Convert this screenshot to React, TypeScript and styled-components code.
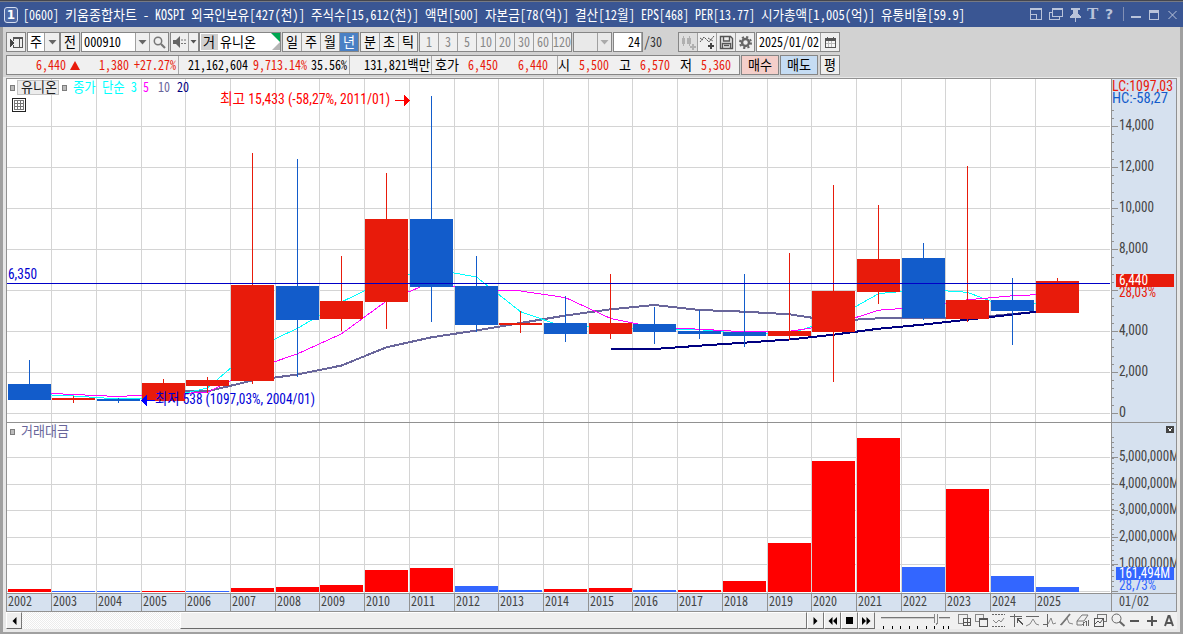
import React from 'react';
import styled, { createGlobalStyle } from 'styled-components';

const RED = '#e81b0b';
const BLUE = '#125ccb';
const GRID = '#d4d4d4';
const LINE = '#919191';
const AXIS = '#d6e1ef';

const Global = createGlobalStyle`
  * { box-sizing: border-box; }
  body { margin: 0; overflow: hidden; }
  svg { display: block; flex: none; }
`;

/* ---------- text set on a 6px / 12px character grid ---------- */

const measure = (s: string, half: number, full: number) =>
  [...s].reduce((n, c) => n + (c.charCodeAt(0) > 0x2000 ? full : half), 0);

const TextBox = styled.span<{ $w: number; $gap: number; $color?: string }>`
  display: block;
  flex: none;
  width: ${p => p.$w}px;
  margin-left: ${p => p.$gap}px;
  color: ${p => p.$color ?? 'inherit'};
`;
const TextInner = styled.span<{ $k: number }>`
  display: inline-block;
  white-space: pre;
  transform: translateY(-1px) scaleX(${p => p.$k});
  transform-origin: 0 50%;
`;
type TextProps = { children: string; color?: string; gap?: number; w?: number };
function Text({ children, color, gap = 0, w }: TextProps) {
  const width = w ?? measure(children, 6, 12);
  return (
    <TextBox $w={width} $gap={gap} $color={color}>
      <TextInner $k={width / measure(children, 7, 12.88)}>{children}</TextInner>
    </TextBox>
  );
}

/* ---------- window ---------- */

const Window = styled.div`
  display: flex;
  flex-direction: column;
  width: 1183px;
  height: 634px;
  overflow: hidden;
  background: #a0a0a0;
  font: 14px/16px 'Noto Sans Mono CJK KR', 'Noto Sans CJK KR', monospace;
  color: #000;
`;
const TitleBar = styled.header`
  display: flex;
  align-items: center;
  flex: none;
  height: 27px;
  padding: 0 6px 0 4px;
  border-top: 1px solid #44464f;
  background: #3a5693;
  box-shadow: inset 0 1px #777a83;
  color: #fff;
`;
const Badge = styled.span`
  display: flex;
  align-items: center;
  justify-content: center;
  width: 14px;
  height: 16px;
  margin-top: 2px;
  border: 1px solid #d5def0;
  border-radius: 3px;
  background: #4d69a5;
  font: bold 12px/14px 'DejaVu Sans', sans-serif;
`;
const TitleText = styled.div`
  display: flex;
  gap: 6px;
  margin: 2px 0 0 5px;
`;
const WindowButtons = styled.div`
  margin: 2px 0 0 auto;
`;
const Body = styled.main`
  display: flex;
  flex-direction: column;
  height: 605px;
  margin: 0 3px;
  background: #d2d2d2;
`;

/* ---------- toolbars ---------- */

const Bar = styled.div`
  display: flex;
  align-items: center;
  flex: none;
  height: 20px;
  margin: 0 0 3px 3px;
`;
const Group = styled.div<{ $w: number; $gap?: number; $bg?: string }>`
  display: flex;
  flex: none;
  width: ${p => p.$w}px;
  height: 20px;
  margin-left: ${p => p.$gap ?? 0}px;
  border: 1px solid #868686;
  background: ${p => p.$bg ?? '#efefef'};
`;
const Cell = styled.div<{ $w?: number; $bg?: string; $color?: string; $last?: boolean; $align?: string }>`
  display: flex;
  align-items: center;
  justify-content: ${p => p.$align ?? 'center'};
  flex: ${p => (p.$w ? 'none' : '1')};
  width: ${p => (p.$w ? p.$w + 'px' : 'auto')};
  height: 18px;
  border-right: ${p => (p.$last ? 'none' : '1px solid #a0a0a0')};
  background: ${p => p.$bg ?? 'transparent'};
  color: ${p => p.$color ?? '#000'};
`;
const Tag = styled.div`
  display: flex;
  align-items: center;
  width: 17px;
  height: 16px;
  margin: 1px 2px 0 1px;
  padding-left: 2px;
  background: #cfcfcf;
`;
const Counter = styled.div`
  display: flex;
  width: 34px;
  color: #333;
`;
const Divider = styled.i<{ $gap?: number }>`
  width: 1px;
  height: 18px;
  flex: none;
  margin-left: ${p => p.$gap ?? 0}px;
  background: #a8a8a8;
`;
const UpMark = styled.i`
  width: 0;
  margin-left: 4px;
  border: 5px solid transparent;
  border-top: 0;
  border-bottom: 9px solid ${RED};
`;
const Quotes = styled(Group)`
  align-items: center;
  background: #f0f0f0;
`;
const TopPad = styled.div`
  flex: none;
  height: 5px;
`;

const Arrow = ({ color = '#666' }) => (
  <svg width="9" height="5"><path d="M0.5 0h8L4.5 4.5z" fill={color} /></svg>
);

/* ---------- chart frame ---------- */

const ChartArea = styled.section`
  flex: none;
  width: 1177px;
  height: 555px;
  margin-top: -1px;
  padding: 1px 3px 0;
  background: #e8e8e8;
`;
const Frame = styled.div`
  display: grid;
  grid-template-columns: 1104px 65px;
  grid-template-rows: 343px 171px 18px;
  width: 1171px;
  border: 1px solid ${LINE};
`;
const Pane = styled.div<{ $line?: boolean }>`
  display: grid;
  background: #fff;
  border-top: ${p => (p.$line ? `1px solid ${LINE}` : 'none')};
`;
const AxisPane = styled(Pane)`
  background: ${AXIS};
  border-left: 1px solid ${LINE};
`;
const Layer = styled.div`
  grid-area: 1 / 1;
`;
const Legend = styled.div`
  grid-area: 1 / 1;
  display: flex;
  align-self: start;
  align-items: center;
  height: 17px;
  padding: 0 0 2px 3px;
  z-index: 1;
`;
const Bullet = styled.i<{ $gap?: number }>`
  width: 5px;
  height: 6px;
  margin: 2px 0 0 ${p => p.$gap ?? 0}px;
  border: 1px solid #7d7d7d;
  background: #bbb;
`;
const NameChip = styled.div`
  display: flex;
  align-items: center;
  flex: none;
  width: 42px;
  height: 15px;
  margin: 2px 0 0 2px;
  padding: 0 0 1px 3px;
  border: 1px solid #c4c4c4;
  background: #ececec;
  color: #222;
`;
const Years = styled.div`
  display: flex;
  border-top: 1px solid ${LINE};
  background: ${AXIS};
  color: #444;
  line-height: 14px;
`;
const Year = styled.div<{ $w: number; $last: boolean }>`
  flex: none;
  width: ${p => p.$w}px;
  padding-left: 1px;
  border-right: ${p => (p.$last ? 'none' : `1px solid ${LINE}`)};
`;
const LastDay = styled(Years)`
  border-left: 1px solid ${LINE};
  padding-left: 7px;
`;

/* ---------- scroll row ---------- */

const ScrollRow = styled.div`
  display: flex;
  height: 17px;
  width: 1171px;
  background: #f0f0f0;
`;
const Track = styled.div`
  width: 158px;
  background: repeating-conic-gradient(#fff 0 25%, #ececec 0 50%) 0 0 / 2px 2px;
`;
const Raised = styled.div<{ $w: number }>`
  display: flex;
  align-items: center;
  justify-content: center;
  flex: none;
  width: ${p => p.$w}px;
  height: 17px;
  border: 1px solid #fff;
  border-right: 1px solid #777;
  border-bottom: 1px solid #6a6a6a;
  background: #efefef;
`;
const Tools = styled.div`
  display: flex;
  margin-left: 3px;
`;

/* ---------- data ---------- */

const gridX = [51, 96, 141, 185, 230, 275, 319, 364, 409, 454, 498, 543, 588, 632, 677, 722, 767, 811, 856, 901, 945, 990, 1035];
const left = (i: number) => (i === 0 ? 8 : gridX[i - 1] + 1);

/* up?, high, body top, body bottom, low */
const candles: [number, number, number, number, number][] = [
  [0, 360, 384, 400, 400], [1, 396, 398, 400, 403], [0, 398, 399, 401, 403], [1, 379, 383, 401, 401],
  [1, 377, 380, 386, 393], [1, 153, 285, 381, 384], [0, 159, 286, 320, 377], [1, 256, 301, 319, 331],
  [1, 173, 219, 302, 329], [0, 96, 219, 287, 322], [0, 256, 286, 325, 332], [1, 311, 323, 325, 333],
  [0, 296, 323, 334, 342], [1, 274, 323, 334, 339], [0, 307, 324, 332, 344], [0, 310, 331, 334, 339],
  [0, 274, 332, 336, 347], [1, 253, 331, 336, 340], [1, 185, 291, 332, 382], [1, 205, 259, 292, 304],
  [0, 243, 258, 318, 320], [1, 166, 300, 319, 322], [0, 278, 300, 311, 345], [1, 278, 281, 313, 313],
];
const volumes: [number, number][] = [
  [1, 589], [0, 591], [0, 591], [1, 591], [0, 591], [1, 588], [1, 587], [1, 585], [1, 570], [1, 568], [0, 586], [0, 590],
  [1, 589], [1, 588], [0, 590], [1, 590], [1, 581], [1, 543], [1, 461], [1, 438], [0, 567], [1, 489], [0, 576], [0, 587],
];
const closes = candles.map(c => (c[0] ? c[2] : c[3]));
const average = (n: number, head: number[]) =>
  closes.map((_, i) => (i < head.length ? head[i] : closes.slice(i - n + 1, i + 1).reduce((a, b) => a + b, 0) / n));
const points = (ys: number[], from = 0) => ys.map((y, i) => `${left(i + from) + 21.5},${y}`).join(' ');

const ma3 = average(3, [394, 396, 399, 398]);
const ma5 = average(5, [392.5, 394.5, 396.5, 394]);
const ma10 = [390.5, 391.3, 380.5, 374.5, 365.5, 347.3, 337.3, 330.5, 323, 315.5, 309.3, 305, 310, 311.7, 314.3, 321, 318.3, 318, 318, 314, 310];
const ma20 = [349, 349, 345.7, 342.7, 339.5, 334.7, 328.7, 324.6, 319.7, 314.5, 309.5];

function Label({ x, y, w, fill, children }: { x: number; y: number; w: number; fill: string; children: string }) {
  return (
    <text x={x} y={y} textLength={w} lengthAdjust="spacingAndGlyphs" fill={fill}
      fontFamily="'Roboto Condensed', 'Noto Sans CJK KR', sans-serif" fontSize="14.5">{children}</text>
  );
}

const range = (a: number, b: number, step: number) => {
  const out: number[] = [];
  for (let v = a; v < b; v += step) out.push(v);
  return out;
};
const VGrid = ({ y, h }: { y: number; h: number }) => <>{gridX.map(x => <rect key={x} x={x} y={y} width="1" height={h} fill={GRID} />)}</>;

function PricePlot() {
  return (
    <svg width="1104" height="343" viewBox="7 79 1104 343" shapeRendering="crispEdges">
      <VGrid y={79} h={343} />
      {range(126, 414, 41).map(y => <rect key={y} x="7" y={y} width="1103" height="1" fill={GRID} />)}
      <g fill="none">
        <polyline points={points(ma10, 3)} stroke="#69669b" strokeWidth="2" />
        <polyline points={points(ma3)} stroke="#0ff" />
        <polyline points={points(ma5)} stroke="#f0f" />
        <polyline points={points(ma20, 13)} stroke="#000080" strokeWidth="2" />
      </g>
      {candles.map(([up, high, top, bottom, low], i) => (
        <g key={i} fill={up ? RED : BLUE}>
          <rect x={left(i)} y={top} width="43" height={bottom - top} />
          <rect x={left(i) + 21} y={high} width="1" height={low - high} />
        </g>
      ))}
      <rect x="7" y="283" width="1103" height="1" fill="#0000c8" />
      <path d="M395 100h9v1h-9zM404 95l6 5.5-6 5.5z" fill="#f00" />
      <path d="M147 395l-6 5.5 6 5.5zM147 400h8v1h-8z" fill="#00f" />
      <Label x={8} y={279} w={29} fill="#0000d0">6,350</Label>
      <Label x={220} y={104} w={170} fill="#f00">최고 15,433 (-58,27%, 2011/01)</Label>
      <Label x={155} y={404} w={160} fill="#0000d8">최저 538 (1097,03%, 2004/01)</Label>
      <g fill="none" stroke="#222">
        <path d="M12.5 98.5h13v13h-13z" fill="#fff" />
        <path d="M14.5 100.5h9v9h-9zM14.5 103.5h9M14.5 106.5h9M17.5 101v8M20.5 101v8" stroke="#777" />
      </g>
    </svg>
  );
}

function PriceAxis() {
  const labels = ['14,000', '12,000', '10,000', '8,000', '6,000', '4,000', '2,000', '0'];
  return (
    <svg width="64" height="343" viewBox="1112 79 64 343" shapeRendering="crispEdges">
      {range(109.6, 412, 8.2).map(y => <rect key={y} x="1112" y={Math.round(y)} width="2" height="1" fill={LINE} />)}
      {labels.map((t, i) => (
        <g key={t}>
          <rect x="1112" y={126 + i * 41} width="6" height="1" fill={LINE} />
          {t !== '6,000' && <Label x={1119} y={130 + i * 41} w={i < 3 ? 35 : t === '0' ? 7 : 29} fill="#444">{t}</Label>}
        </g>
      ))}
      <rect x="1116" y="274" width="58" height="13" fill={RED} />
      <Label x={1119} y={285} w={29} fill="#fff">6,440</Label>
      <Label x={1119} y={297} w={37} fill={RED}>28,03%</Label>
      <Label x={1112} y={91} w={61} fill={RED}>LC:1097,03</Label>
      <Label x={1112} y={103} w={56} fill={BLUE}>HC:-58,27</Label>
    </svg>
  );
}

const volumeY = [457, 484, 510, 537, 564];
function VolumePlot() {
  return (
    <svg width="1104" height="170" viewBox="7 423 1104 170" shapeRendering="crispEdges">
      <VGrid y={423} h={170} />
      {[...volumeY, 591].map(y => <rect key={y} x="7" y={y} width="1103" height="1" fill={GRID} />)}
      {volumes.map(([up, y], i) => <rect key={i} x={left(i)} y={y} width="43" height={592 - y} fill={up ? '#f00' : '#36f'} />)}
    </svg>
  );
}

function VolumeAxis() {
  return (
    <svg width="64" height="170" viewBox="1112 423 64 170" shapeRendering="crispEdges">
      {range(437, 592, 5.13).map(y => <rect key={y} x="1112" y={Math.round(y)} width="2" height="1" fill={LINE} />)}
      {volumeY.map((y, i) => (
        <g key={y}>
          <rect x="1112" y={y} width="6" height="1" fill={LINE} />
          <Label x={1119} y={y + 4} w={60} fill="#444">{`${5 - i},000,000M`}</Label>
        </g>
      ))}
      <rect x="1112" y="591" width="6" height="1" fill={LINE} />
      <rect x="1116" y="567" width="58" height="13" fill="#36f" />
      <Label x={1119} y={578} w={51} fill="#fff">161,494M</Label>
      <Label x={1119} y={590} w={37} fill="#36f">28,73%</Label>
      <rect x="1166" y="426" width="8" height="7" fill="#444" />
      <path d="M1168.5 428.5l3 3M1171.5 428.5l-3 3" stroke="#fff" />
    </svg>
  );
}

function TitleIcons() {
  return (
    <svg width="147" height="18" viewBox="1030 6 147 18" fill="none" stroke="#b9c3da">
      <g shapeRendering="crispEdges">
        <path d="M1030.5 8.5h11v11h-11zM1030 9.5h12M1030.5 14.5h5.5v5M1036.5 14v6" />
        <path d="M1052.5 8.5h10v8h-10zM1052 9.5h11M1052 12.5h-2.5v7h10v-2.5" />
        <path d="M1071 8h9v2h-2v4l3 2v2h-11v-2l3-2v-4h-2zM1075 18h1v4h-1z" fill="#b9c3da" stroke="none" />
        <path d="M1123.5 7v14" stroke="#8290b5" />
        <path d="M1131 17.5h10M1131 16.5h10" />
        <path d="M1149.5 10.5h9v9h-9zM1149 11.5h10M1149 12.5h10" />
      </g>
      <path d="M1168.5 11l8 8M1176.5 11l-8 8" />
      <g fill="#b9c3da" stroke="none" fontFamily="'Liberation Serif', serif" fontWeight="bold" fontSize="17">
        <text x="1087" y="19">T</text>
        <text x="1105" y="18.5" fontFamily="'DejaVu Sans', sans-serif" fontSize="14">?</text>
      </g>
    </svg>
  );
}

function BottomTools() {
  return (
    <svg width="298" height="17" viewBox="878 612 298 17" fill="none" stroke="#666">
      <g shapeRendering="crispEdges">
        <path d="M881 617.5h69" stroke="#777" />
        <path d="M881 618.5h69" stroke="#ccc" />
        <path d="M934 614h5v9l-2 2-3-2z" fill="#f0f0f0" stroke="none" />
        <path d="M934.5 614v9M937.5 614v9l-1.5 2" stroke="#888" />
        {[883, 892, 900, 909, 917, 926, 934, 943, 948].map(x => <path key={x} d={`M${x}.5 626v3`} stroke="#000" />)}
        <path d="M958.5 614.5h9v9h-9z" stroke="#888" />
        <path d="M963.5 618.5h7v7h-7zM967.5 618.5v7M963.5 622.5h7" fill="#f0f0f0" stroke="#555" />
        <path d="M975.5 614.5h8v7h-8z" stroke="#888" />
        <path d="M979.5 618.5h8v8h-8zM979 619.5h9" fill="#f0f0f0" stroke="#555" />
        <path d="M992 614.5h13M992 626.5h13" strokeDasharray="2 1" />
        <path d="M1010 616.5h12M1014.5 614v13" />
        <path d="M1017 618h5v1h-3l4 5-1 1-4-5v3h-1z" fill="#555" stroke="none" />
        <path d="M1026 616.5h13M1047.5 614v13M1043 624.5h4" />
        <path d="M1083.5 622v4M1086.5 621v5M1088.5 620v6" />
        <path d="M1097.5 614.5h9v7h-9z" stroke="#777" />
        <path d="M1094.5 618.5h9v8h-9z" fill="#f0f0f0" stroke="#555" />
      </g>
      <path d="M993 620l3 3 3-3 2 2 3-4M1026 626l4-2 3-5 3 5 3 1M1048 624l3-6 2 6 3-1M1060 625l4-3 3-4 2 5 4 1" stroke="#888" />
      <path d="M1061 625l9-11" strokeWidth="1.8" stroke="#777" />
      <path d="M1077 621l5-6h6l-4 6zM1077 621v4h5l4-4" stroke="#777" />
      <path d="M1095 624l3-3 2 2 3-4" stroke="#555" />
      <circle cx="1116.5" cy="618.5" r="4.5" />
      <path d="M1119.5 621.5l5 4.5" strokeWidth="2" />
      <path d="M1130 621h9M1147 621h10M1152 616v10" strokeWidth="2" stroke="#555" shapeRendering="crispEdges" />
      <path d="M1165 626l3.5-10h1l3.5 10M1166.5 623h6" strokeWidth="2" stroke="#555" />
    </svg>
  );
}

const title = '[0600] 키움종합차트 - KOSPI 외국인보유[427(천)] 주식수[15,612(천)] 액면[500] 자본금[78(억)] 결산[12월] EPS[468] PER[13.77] 시가총액[1,005(억)] 유통비율[59.9]';

export default function App() {
  const edges = [7, ...gridX.map(x => x + 1), 1111];
  return (
    <Window>
      <Global />
      <TitleBar>
        <Badge>1</Badge>
        <TitleText>
          {title.split(' ').map(word => <Text key={word}>{word}</Text>)}
        </TitleText>
        <WindowButtons><TitleIcons /></WindowButtons>
      </TitleBar>
      <Body>
        <TopPad />
        <Bar>
          <Group $w={20}>
            <Cell $last>
              <svg width="13" height="13" shapeRendering="crispEdges">
                <path d="M3.5 5V1.5h9v10h-9V9M3 2.5h10M9.5 3v9" fill="none" stroke="#555" />
                <path d="M0 3l4 4-4 4z" fill="#444" />
              </svg>
            </Cell>
          </Group>
          <Group $w={33} $gap={1}>
            <Cell $w={17} $bg="#fff"><Text>주</Text></Cell>
            <Cell $last><Arrow /></Cell>
          </Group>
          <Group $w={20}><Cell $last><Text>전</Text></Cell></Group>
          <Group $w={88} $gap={1}>
            <Cell $w={54} $bg="#fff" $align="flex-start"><Text gap={2} w={37}>000910</Text></Cell>
            <Cell $w={14}><Arrow /></Cell>
            <Cell $last>
              <svg width="13" height="13" fill="none" stroke="#777">
                <circle cx="5" cy="5" r="3.7" strokeWidth="1.5" /><path d="M8 8l4 4" strokeWidth="2.2" />
              </svg>
            </Cell>
          </Group>
          <Group $w={29} $gap={1}>
            <Cell $w={18}>
              <svg width="13" height="12">
                <path d="M0 4h3l4-4v12L3 8H0z" fill="#666" />
                <path d="M8 4h2M8 7.5h2M11 4h2M11 7.5h2" stroke="#777" />
              </svg>
            </Cell>
            <Cell $last><svg width="7" height="4"><path d="M0.5 0h6l-3 3.5z" fill="#555" /></svg></Cell>
          </Group>
          <Group $w={82} $bg="#fff">
            <Tag><Text>거</Text></Tag>
            <Cell $last $align="space-between">
              <Text>유니온</Text>
              <svg width="9" height="18" viewBox="15 0 9 18">
                <path d="M15 0h9v9z" fill="#00a651" /><path d="M24 9v8h-8z" fill="#b5b5b5" />
              </svg>
            </Cell>
          </Group>
          <Group $w={77} $gap={1}>
            <Cell $w={19}><Text>일</Text></Cell>
            <Cell $w={19}><Text>주</Text></Cell>
            <Cell $w={19}><Text>월</Text></Cell>
            <Cell $last $bg="#4a80c4" $color="#fff"><Text>년</Text></Cell>
          </Group>
          <Group $w={58} $gap={1}>
            <Cell $w={19}><Text>분</Text></Cell>
            <Cell $w={19}><Text>초</Text></Cell>
            <Cell $last><Text>틱</Text></Cell>
          </Group>
          <Group $w={153} $gap={1}>
            {['1', '3', '5', '10', '20', '30', '60', '120'].map((n, i) => (
              <Cell key={n} $w={i < 7 ? 19 : 18} $last={i === 7} $color="#888"><Text>{n}</Text></Cell>
            ))}
          </Group>
          <Group $w={39} $gap={1} $bg="#e9e9e9">
            <Cell $w={24} />
            <Cell $last><Arrow color="#aaa" /></Cell>
          </Group>
          <Group $w={30} $gap={1} $bg="#fff">
            <Cell $last $align="flex-end"><Text>24</Text><Divider $gap={1} /></Cell>
          </Group>
          <Counter><Text gap={1}>/30</Text></Counter>
          <Group $w={77} $gap={1}>
            <Cell $w={19} $bg="#dedede">
              <svg width="15" height="15" fill="#b0b0b0" shapeRendering="crispEdges">
                <path d="M1 3h3v6H1zM2 1h1v10H2zM6 3h4v6H6zM7.5 1h1v10h-1zM9 11h6v2H9zM11 9h2v6h-2z" />
              </svg>
            </Cell>
            <Cell $w={19}>
              <svg width="16" height="16" fill="none" stroke="#555">
                <path d="M1 8l4-5 5 5 5-6M1 4l3 2M9 4l5 3" strokeDasharray="2 0.5" />
                <path d="M9 12h6M12 9v6" stroke="#444" strokeWidth="2" />
              </svg>
            </Cell>
            <Cell $w={19}>
              <svg width="15" height="15" fill="none" stroke="#555">
                <path d="M1.5 1.5h10l2 2v10h-12zM4.5 2v4h6V2M3.5 13V8.5h8V13M5 10.5h5" strokeWidth="1.4" />
              </svg>
            </Cell>
            <Cell $last>
              <svg width="15" height="15" fill="none" stroke="#666">
                <circle cx="7.5" cy="7.5" r="3.5" strokeWidth="2.5" />
                <circle cx="7.5" cy="7.5" r="5.5" strokeWidth="2" strokeDasharray="2.160 2.160" />
              </svg>
            </Cell>
          </Group>
          <Group $w={84} $gap={1}>
            <Cell $w={64} $bg="#fff" $align="flex-start"><Text gap={2}>2025/01/02</Text></Cell>
            <Cell $last>
              <svg width="11" height="11" shapeRendering="crispEdges">
                <path d="M0.5 1.5h10v9H0.5z" fill="#f6f6f6" stroke="#555" />
                <path d="M0 1h11v3H0zM2 0h1v1H2zM8 0h1v1H8z" fill="#555" />
                <path d="M1 6.5h9M3.5 4v6M6.5 4v6" stroke="#bbb" />
              </svg>
            </Cell>
          </Group>
        </Bar>
        <Bar>
          <Quotes $w={734}>
            <Text gap={29} color={RED}>6,440</Text>
            <UpMark />
            <Text gap={19} color={RED}>1,380</Text>
            <Text gap={5} color={RED}>+27.27%</Text>
            <Divider $gap={2} />
            <Text gap={9}>21,162,604</Text>
            <Text gap={5} color={RED}>9,713.14%</Text>
            <Text gap={4}>35.56%</Text>
            <Divider $gap={2} />
            <Text gap={14}>131,821백만</Text>
            <Divider $gap={1} />
            <Text gap={3}>호가</Text>
            <Text gap={9} color={RED}>6,450</Text>
            <Text gap={20} color={RED}>6,440</Text>
            <Divider $gap={9} />
            <Text>시</Text>
            <Text gap={9} color={RED}>5,500</Text>
            <Text gap={10}>고</Text>
            <Text gap={9} color={RED}>6,570</Text>
            <Text gap={10}>저</Text>
            <Text gap={9} color={RED}>5,360</Text>
          </Quotes>
          <Group $w={38} $gap={1} $bg="#f4cfca"><Cell $last><Text>매수</Text></Cell></Group>
          <Group $w={38} $gap={1} $bg="#c5dcf3"><Cell $last><Text>매도</Text></Cell></Group>
          <Group $w={20} $gap={2}><Cell $last><Text>평</Text></Cell></Group>
        </Bar>
        <ChartArea>
          <Frame>
            <Pane>
              <Layer><PricePlot /></Layer>
              <Legend>
                <Bullet />
                <NameChip><Text>유니온</Text></NameChip>
                <Bullet $gap={3} />
                <Text gap={6} w={64} color="#0ff">종가 단순 3</Text>
                <Text gap={6} color="#f0f">5</Text>
                <Text gap={9} color="#69669b">10</Text>
                <Text gap={7} color="#000080">20</Text>
              </Legend>
            </Pane>
            <AxisPane><PriceAxis /></AxisPane>
            <Pane $line>
              <Layer><VolumePlot /></Layer>
              <Legend>
                <Bullet />
                <Text gap={6} color="#69669b">거래대금</Text>
              </Legend>
            </Pane>
            <AxisPane $line><VolumeAxis /></AxisPane>
            <Years>
              {candles.map((_, i) => (
                <Year key={i} $w={edges[i + 1] - edges[i]} $last={i === 23}><Text>{String(2002 + i)}</Text></Year>
              ))}
            </Years>
            <LastDay><Text>01/02</Text></LastDay>
          </Frame>
          <ScrollRow>
            <Raised $w={16}><svg width="5" height="8"><path d="M4.5 0v8L0.5 4z" /></svg></Raised>
            <Track />
            <Raised $w={627} />
            <Raised $w={17}><svg width="5" height="8"><path d="M0.5 0v8l4-4z" /></svg></Raised>
            <Raised $w={17}><svg width="9" height="8"><path d="M4.5 0v8L0.5 4zM9 0v8L5 4z" /></svg></Raised>
            <Raised $w={17}><svg width="7" height="7"><path d="M0 0h7v7H0z" /></svg></Raised>
            <Raised $w={17}><svg width="9" height="8"><path d="M0 0v8l4-4zM4.5 0v8l4-4z" /></svg></Raised>
            <Tools><BottomTools /></Tools>
          </ScrollRow>
        </ChartArea>
      </Body>
    </Window>
  );
}
